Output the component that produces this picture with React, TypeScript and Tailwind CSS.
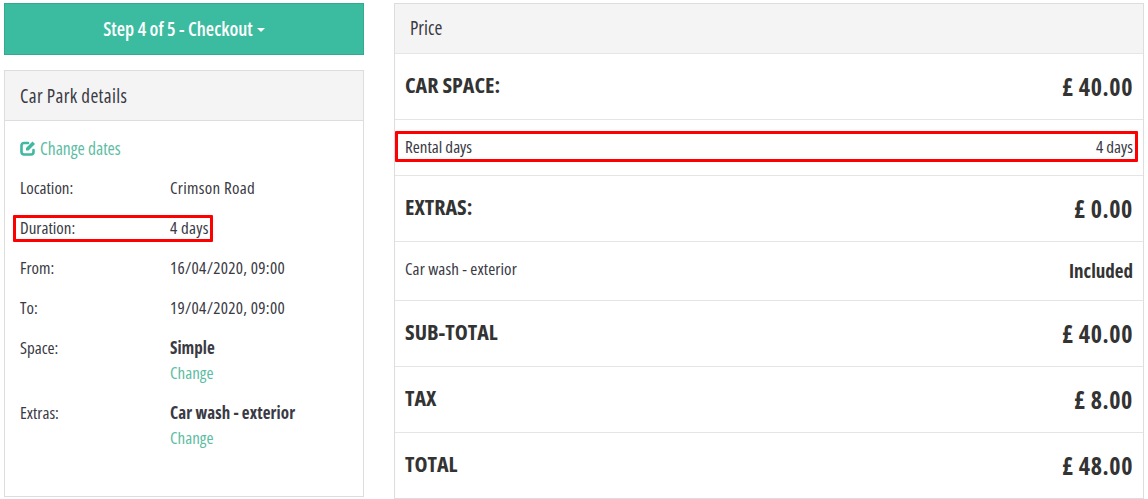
const details = [
  { label: 'Location:', value: 'Crimson Road' },
  { label: 'Duration:', value: '4 days', marked: true },
  { label: 'From:', value: '16/04/2020, 09:00' },
  { label: 'To:', value: '19/04/2020, 09:00' },
];

function EditIcon() {
  return (
    <svg viewBox="0 0 17 16" className="h-4 w-[17px] shrink-0" fill="none">
      <path d="M13.5 10v2a2.5 2.5 0 0 1-2.500 2.500H4A2.500 2.500 0 0 1 1.500 12V5.500A2.500 2.500 0 0 1 4 3h4" stroke="#3fb9a0" strokeWidth="2.6" strokeLinecap="round" />
      <path d="M6 8 12.500 1.500l2.500 2.500-6.500 6.500H6z" fill="#3fb9a0" />
    </svg>
  );
}

function PriceRow({ label, value, height }: { label: string; value: string; height: string }) {
  return (
    <div className={`flex items-center justify-between border-t border-[#e5e5e5] pl-[10px] pr-[10px] ${height}`}>
      <span className="mb-[5px] text-[22px] font-bold text-[#333]">{label}</span>
      <span className="text-[24px] font-bold tracking-[0.6px] text-[#333]">{value}</span>
    </div>
  );
}

export default function App() {
  return (
    <div
      style={{ fontFamily: '"Open Sans", "Liberation Sans", sans-serif' }}
      className="flex h-[499px] w-[1148px] overflow-hidden bg-white text-[17px] text-[#3a3a44] font-stretch-condensed"
    >
      {/* Left column */}
      <div className="ml-1 mt-[3px] flex w-[360px] flex-col">
        <button className="flex h-[52px] items-center justify-center gap-1 border border-[#34a98f] bg-[#3bbba0] text-[19px] font-semibold text-white">
          Step 4 of 5 - Checkout
          <span className="mt-[2px] h-0 w-0 border-x-4 border-t-4 border-x-transparent border-t-white" />
        </button>

        <div className="mt-[15px] h-[427px] border border-[#ddd]">
          <div className="flex h-[50px] items-center border-b border-[#ddd] bg-[#f4f4f4] px-[15px] pt-[2px] text-[19px] tracking-[0.35px]">
            Car Park details
          </div>
          <div className="px-[15px] pt-[17px]">
            <a className="flex h-[20px] items-center gap-[3px] text-[17.5px] text-[#5dbda3]">
              <EditIcon />
              Change dates
            </a>
            <div className="mt-5 flex flex-col gap-5">
              {details.map((d) => (
                <div key={d.label} className="relative flex h-5 items-center">
                  {d.marked && (
                    <div className="absolute -left-[7px] top-[-3px] h-[27px] w-[200px] rounded-[1px] border-[3px] border-[#f00]" />
                  )}
                  <span className="w-[150px]">{d.label}</span>
                  <span className="tracking-[0.3px]">{d.value}</span>
                </div>
              ))}
              <div className="flex items-start">
                <span className="w-[150px] leading-5">Space:</span>
                <div className="flex flex-col gap-[5px] leading-5">
                  <span className="font-bold">Simple</span>
                  <a className="text-[#5dbda3]">Change</a>
                </div>
              </div>
              <div className="flex items-start">
                <span className="w-[150px] leading-5">Extras:</span>
                <div className="flex flex-col gap-[5px] leading-5">
                  <span className="font-bold tracking-[0.1px]">Car wash - exterior</span>
                  <a className="text-[#5dbda3]">Change</a>
                </div>
              </div>
            </div>
          </div>
        </div>
      </div>

      {/* Price panel */}
      <div className="ml-[30px] mt-[3px] h-[496px] w-[750px] border border-[#ddd]">
        <div className="flex h-[49px] items-center bg-[#f4f4f4] px-[15px] text-[19px]">Price</div>
        <PriceRow label="CAR SPACE:" value="£ 40.00" height="h-[66px] border-[#ddd]" />
        <div className="relative flex h-[56px] items-center justify-between border-t border-[#e5e5e5] px-[10px] pb-[2px]">
          <div className="absolute left-0 right-[5px] top-[11px] h-[31px] rounded-[1px] border-[3px] border-[#f00]" />
          <span>Rental days</span>
          <span>4 days</span>
        </div>
        <PriceRow label="EXTRAS:" value="£ 0.00" height="h-[66px]" />
        <div className="flex h-[59px] items-center justify-between border-t border-[#e5e5e5] px-[10px]">
          <span className="mb-[5px] tracking-[0.1px]">Car wash - exterior</span>
          <span className="text-[19px] font-bold text-[#333]">Included</span>
        </div>
        <PriceRow label="SUB-TOTAL" value="£ 40.00" height="h-[66px]" />
        <PriceRow label="TAX" value="£ 8.00" height="h-[66px]" />
        <PriceRow label="TOTAL" value="£ 48.00" height="h-[66px]" />
      </div>
    </div>
  );
}
